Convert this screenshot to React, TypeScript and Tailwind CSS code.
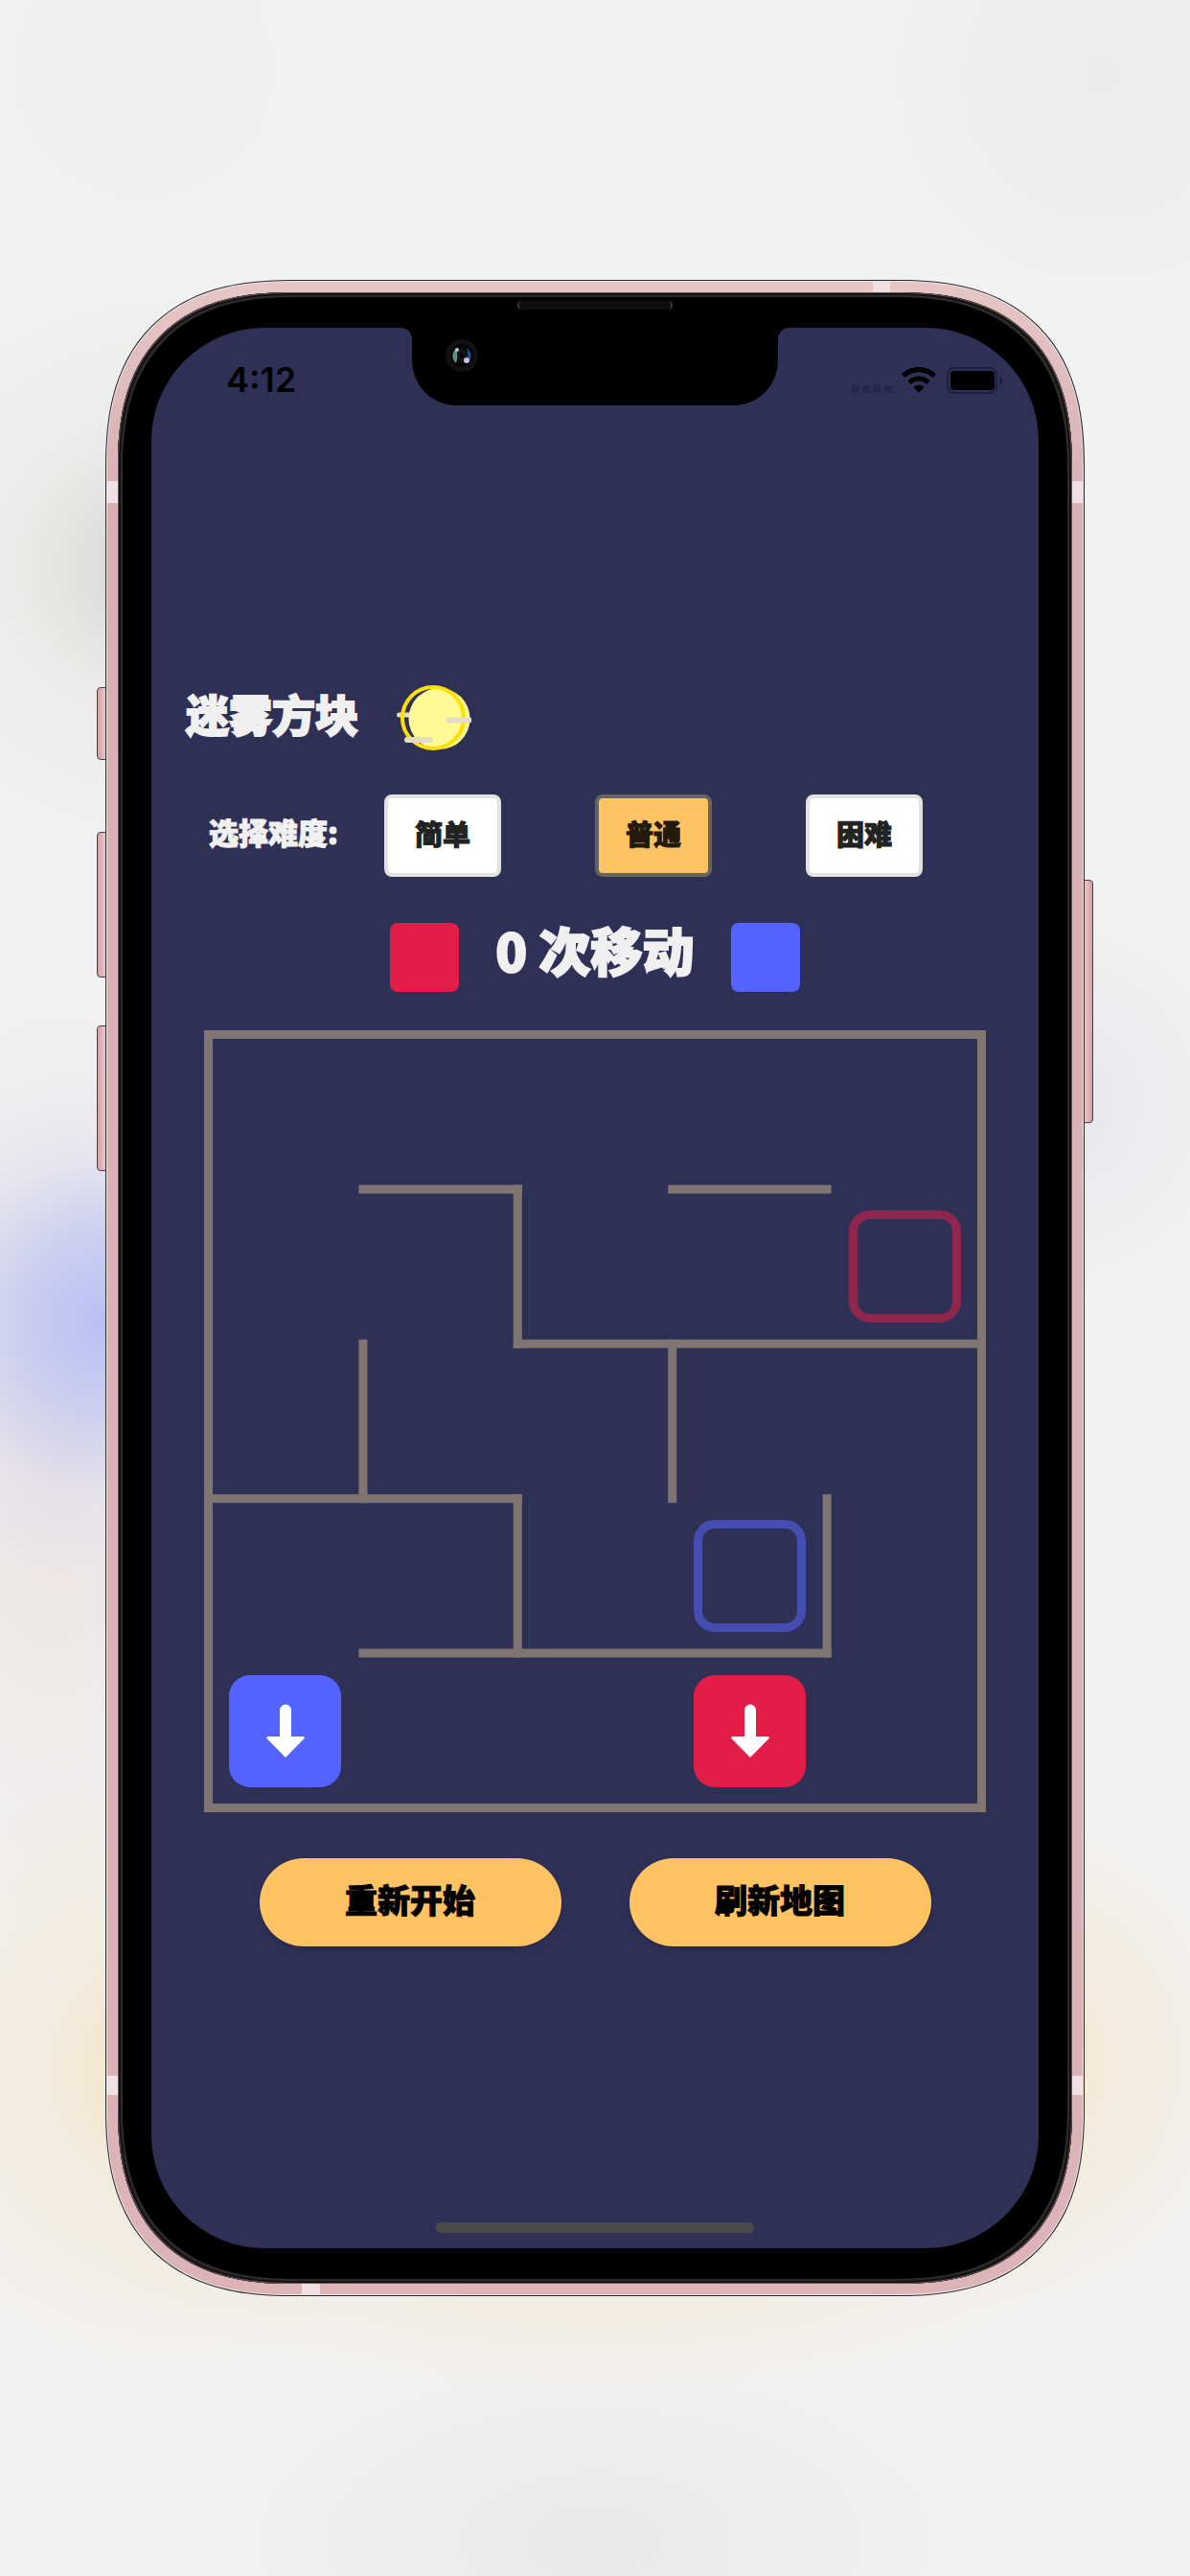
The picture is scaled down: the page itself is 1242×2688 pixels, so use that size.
import { useState } from "react";

type Tone = "red" | "blue";

const LEVELS = ["简单", "普通", "困难"];

// Walls in cell units: [x1, y1, x2, y2]
const WALLS: [number, number, number, number][] = [
  [0, 0, 5, 0],
  [5, 0, 5, 5],
  [0, 5, 5, 5],
  [0, 0, 0, 5],
  [1, 1, 2, 1],
  [3, 1, 4, 1],
  [2, 1, 2, 2],
  [2, 2, 5, 2],
  [1, 2, 1, 3],
  [3, 2, 3, 3],
  [0, 3, 2, 3],
  [2, 3, 2, 4],
  [4, 3, 4, 4],
  [1, 4, 4, 4],
];

const GOALS: Record<number, Tone> = { 9: "red", 18: "blue" };
const PLAYERS: Record<number, Tone> = { 20: "blue", 23: "red" };

function MoonIcon() {
  return (
    <svg viewBox="0 0 78 68" className="h-[68px] w-[78px]" aria-hidden="true">
      <path d="M2.5 31h14" stroke="#e4dcc4" strokeWidth="5" strokeLinecap="round" />
      <circle cx="44.500" cy="35" r="32" fill="#fffa96" />
      <circle cx="38" cy="34" r="32" fill="none" stroke="#ffe100" strokeWidth="4" />
      <path d="M54.500 36.500h21M11 57h24" stroke="#e4dcc4" strokeWidth="6" strokeLinecap="round" />
    </svg>
  );
}

function ArrowDown() {
  return (
    <svg viewBox="0 0 40 56" className="h-14 w-10" aria-hidden="true">
      <path
        d="M20 .5a6 6 0 0 1 6 6V34h12.500a1.300 1.300 0 0 1 .9 2.200L20 56 .6 36.200A1.300 1.300 0 0 1 1.500 34H14V6.500a6 6 0 0 1 6-6z"
        fill="#fff"
      />
    </svg>
  );
}

function StatusIcons() {
  return (
    <svg viewBox="0 0 158 28" className="h-7 w-[158px]" aria-label="Wi-Fi, 电量已满" role="img">
      <g fill="#25264a">
        <rect x="0" y="19" width="8" height="8" rx="2" />
        <rect x="11" y="19" width="8" height="8" rx="2" />
        <rect x="22" y="19" width="8" height="8" rx="2" />
        <rect x="34" y="19" width="8" height="8" rx="2" />
      </g>
      <path
        d="M70 0C63.200 0 57.100 2.600 52.500 6.900c-.4.400-.4.900 0 1.300l2.300 2.400c.4.400.9.400 1.300 0C59.700 7.300 64.600 5.200 70 5.200s10.300 2.100 13.900 5.400c.4.400.9.400 1.300 0l2.300-2.400c.4-.4.4-.9 0-1.300C82.900 2.600 76.800 0 70 0z"
        fill="#000"
      />
      <path
        d="M70 9.500c-4.300 0-8.100 1.600-11.100 4.300-.4.300-.4.900 0 1.300l2.300 2.300c.4.400.9.400 1.300.1 2-1.800 4.600-2.900 7.500-2.900s5.500 1.100 7.500 2.900c.4.300.9.300 1.300-.1l2.300-2.300c.4-.4.4-1 0-1.300-3-2.700-6.800-4.300-11.100-4.300z"
        fill="#000"
      />
      <path
        d="M70 18.700c-1.900 0-3.600.7-4.900 1.800-.4.400-.4.900 0 1.300l4.200 4.300c.4.400 1 .4 1.400 0l4.200-4.300c.4-.4.4-.9 0-1.300-1.300-1.100-3-1.800-4.900-1.800z"
        fill="#000"
      />
      <rect x="100" y="1" width="51" height="26" rx="7" fill="none" stroke="#1f2040" strokeWidth="2" />
      <rect x="103" y="4" width="46" height="20" rx="4" fill="#000" />
      <path d="M154 9.500c2 .7 3.300 2.500 3.300 4.700s-1.300 4-3.300 4.700z" fill="#1f2040" />
    </svg>
  );
}

function Notch() {
  return (
    <svg
      viewBox="0 0 406 81"
      className="absolute left-1/2 top-0 h-[81px] w-[406px] -translate-x-1/2"
      aria-hidden="true"
    >
      <defs>
        <radialGradient id="lens">
          <stop offset="0" stopColor="#000" />
          <stop offset=".5" stopColor="#161616" />
          <stop offset="1" stopColor="#050505" />
        </radialGradient>
      </defs>
      <path d="M0 0h406c-7 0-12 5-12 12v21c0 27-20 48-47 48H59C32 81 12 60 12 33V12C12 5 7 0 0 0z" fill="#000" />
      <circle cx="64" cy="29" r="17" fill="#111" />
      <circle cx="64" cy="29" r="12" fill="#030303" />
      <circle cx="64" cy="29" r="10" fill="url(#lens)" />
      <path d="M59 21c-6 4-6 12-1 16 2-5 1-10 1-16z" fill="#5f8f78" />
      <path d="M69 21c6 4 6 12 1 16-1-5 2-9-1-16z" fill="#1d4f96" />
      <circle cx="59" cy="23" r="2" fill="#b8cfc4" />
      <circle cx="69" cy="34" r="3" fill="#c9bfe0" />
    </svg>
  );
}

function Board() {
  const at = (n: number) => 4.5 + n * 161.4;
  return (
    <div className="relative mx-[55px] mt-10 aspect-square">
      <svg viewBox="0 0 816 816" className="absolute inset-0 h-full w-full" aria-hidden="true">
        {WALLS.map(([x1, y1, x2, y2]) => (
          <line
            key={`${x1}-${y1}-${x2}-${y2}`}
            x1={at(x1)}
            y1={at(y1)}
            x2={at(x2)}
            y2={at(y2)}
            stroke="#7f7573"
            strokeWidth="9"
            strokeLinecap="square"
          />
        ))}
      </svg>
      <div className="grid h-full grid-cols-5 grid-rows-5 p-1">
        {Array.from({ length: 25 }, (_, i) => (
          <div key={i} className="flex items-center justify-center">
            {GOALS[i] && (
              <div
                className={
                  GOALS[i] === "red"
                    ? "size-[117px] rounded-[22px] border-9 border-[#8f264e]"
                    : "size-[117px] rounded-[22px] border-9 border-[#454db0]"
                }
              />
            )}
            {PLAYERS[i] && (
              <button
                type="button"
                aria-label={PLAYERS[i] === "red" ? "红色方块" : "蓝色方块"}
                className={
                  PLAYERS[i] === "red"
                    ? "flex size-[117px] items-center justify-center rounded-[22px] bg-[#e11d48]"
                    : "flex size-[117px] items-center justify-center rounded-[22px] bg-[#5462ff]"
                }
              >
                <ArrowDown />
              </button>
            )}
          </div>
        ))}
      </div>
    </div>
  );
}

function SideButtons() {
  return (
    <div aria-hidden="true">
      <div className="absolute -left-[9px] top-[425px] h-[76px] w-2.5 rounded-l-[4px] border border-[#4b3d42] bg-linear-to-r from-[#cfa1a5] to-[#efc6c8]" />
      <div className="absolute -left-[9px] top-[576px] h-[152px] w-2.5 rounded-l-[4px] border border-[#4b3d42] bg-linear-to-r from-[#cfa1a5] to-[#efc6c8]" />
      <div className="absolute -left-[9px] top-[778px] h-[152px] w-2.5 rounded-l-[4px] border border-[#4b3d42] bg-linear-to-r from-[#cfa1a5] to-[#efc6c8]" />
      <div className="absolute -right-[9px] top-[626px] h-[254px] w-2.5 rounded-r-[4px] border border-[#4b3d42] bg-linear-to-l from-[#cfa1a5] to-[#efc6c8]" />
    </div>
  );
}

function Antennas() {
  return (
    <div aria-hidden="true">
      <div className="absolute left-0 top-[208px] h-[23px] w-[11px] bg-[#efe1e3]" />
      <div className="absolute right-0 top-[208px] h-[23px] w-[11px] bg-[#efe1e3]" />
      <div className="absolute bottom-[208px] left-0 h-5 w-[11px] bg-[#efe1e3]" />
      <div className="absolute bottom-[208px] right-0 h-5 w-[11px] bg-[#efe1e3]" />
      <div className="absolute right-[201px] top-0 h-[11px] w-[18px] bg-[#efe1e3]" />
      <div className="absolute bottom-0 left-[203px] h-[11px] w-[19px] bg-[#efe1e3]" />
    </div>
  );
}

export default function App() {
  const [level, setLevel] = useState("普通");

  return (
    <div className="flex min-h-screen items-center justify-center bg-[#f2f2f2] bg-[radial-gradient(circle_at_110px_1380px,#b9bff5_0,#c4c8f1cc_90px,#d8daf055_180px,transparent_270px),radial-gradient(circle_at_180px_2160px,#f4e3bd_0,#f2e6cc77_140px,transparent_320px),radial-gradient(circle_at_1040px_2150px,#f6dfb0_0,#f3e4c577_120px,transparent_260px),radial-gradient(ellipse_520px_150px_at_620px_2350px,#f1e5ccaa_0,transparent_100%),radial-gradient(circle_at_150px_590px,#d6d6d4_0,#e2e2e077_130px,transparent_300px),radial-gradient(circle_at_1150px_80px,#ebebeb_0,transparent_260px),radial-gradient(circle_at_150px_70px,#efefef_0,transparent_240px),radial-gradient(ellipse_400px_200px_at_620px_2650px,#e8e8e8_0,transparent_100%),radial-gradient(circle_at_1100px_1150px,#e6e5ea_0,transparent_200px),radial-gradient(ellipse_240px_500px_at_60px_1520px,#ebe3e3_0,transparent_100%)] px-[110px] py-16 font-['Inter','Noto_Sans_CJK_SC',sans-serif]">
      <div className="relative w-full max-w-5xl">
        <SideButtons />
        <div className="relative rounded-[168px] bg-[#23282d] p-px [corner-shape:superellipse(1.3)] supports-[corner-shape:squircle]:rounded-[196px]">
          <div className="rounded-[167px] bg-[#eee3e5] p-px [corner-shape:superellipse(1.3)] supports-[corner-shape:squircle]:rounded-[195px]">
            <div className="relative rounded-[166px] bg-linear-to-b from-[#e6c7c5] via-[#d9b1b5] via-10% to-[#dcb3b7] p-[11px] [corner-shape:superellipse(1.3)] supports-[corner-shape:squircle]:rounded-[194px]">
              <Antennas />
              <div className="relative rounded-[155px] bg-black px-[35px] py-[37px] shadow-[inset_0_0_0_1px_#5e5052,inset_0_0_0_3px_#151213,inset_0_0_0_5px_#2c2c2c] [corner-shape:superellipse(1.3)] supports-[corner-shape:squircle]:rounded-[183px]">
                <div className="absolute left-1/2 top-[9px] h-[9px] w-[162px] -translate-x-1/2 rounded-full border-x-2 border-[#3a3a3a] bg-[#0e0e0e]" />
                <main className="relative flex flex-col rounded-[118px] bg-[#2f3056] pb-4">
                  <Notch />
                  <header className="flex h-[81px] items-end justify-between pl-[78px] pr-[37px]">
                    <time className="text-[36px] leading-[54px] font-semibold text-black">4:12</time>
                    <div className="pb-3">
                      <StatusIcons />
                    </div>
                  </header>

                  <div className="mt-[292px] flex items-center gap-10 pl-9 font-['Noto_Sans_CJK_SC',sans-serif]">
                    <h1 className="pb-2 text-[45px] leading-[60px] font-black text-[#f0f0f0] [-webkit-text-stroke:2px_#f0f0f0]">
                      迷雾方块
                    </h1>
                    <MoonIcon />
                  </div>

                  <div
                    role="group"
                    aria-labelledby="level-label"
                    className="mt-[46px] flex items-center pl-[60px] font-['Noto_Sans_CJK_SC',sans-serif]"
                  >
                    <span
                      id="level-label"
                      className="w-[183px] pb-2 text-[31px] leading-10 font-black text-[#f0f0f0] [-webkit-text-stroke:1px_#f0f0f0]"
                    >
                      选择难度:
                    </span>
                    <div className="flex gap-[98px]">
                      {LEVELS.map((name) => (
                        <button
                          key={name}
                          type="button"
                          aria-pressed={name === level}
                          onClick={() => setLevel(name)}
                          className={
                            name === level
                              ? "h-[86px] w-[122px] rounded-lg border-4 border-[#666460] bg-[#ffc363] pb-1 text-[29px] font-black text-[#221a0d] [-webkit-text-stroke:1px_#221a0d]"
                              : "h-[86px] w-[122px] rounded-lg border-4 border-[#e2e2e2] bg-white pb-1 text-[29px] font-black text-[#222222] [-webkit-text-stroke:1px_#222222]"
                          }
                        >
                          {name}
                        </button>
                      ))}
                    </div>
                  </div>

                  <div className="mt-12 flex h-[72px] items-center justify-center gap-[34px] font-['Noto_Sans_CJK_SC',sans-serif]">
                    <div className="size-[72px] rounded-lg bg-[#e11d48]" />
                    <p className="w-[216px] pb-4 text-center text-[54px] leading-[64px] font-black whitespace-nowrap text-[#f0f0f0] [-webkit-text-stroke:2px_#f0f0f0]">
                      0 次移动
                    </p>
                    <div className="size-[72px] rounded-lg bg-[#5462ff]" />
                  </div>

                  <Board />

                  <div className="mt-12 flex justify-center gap-[71px] font-['Noto_Sans_CJK_SC',sans-serif]">
                    <button
                      type="button"
                      className="h-[92px] w-[315px] rounded-full bg-[#ffc363] pb-2 text-[34px] font-black text-black shadow-[0_2px_4px_#0003] [-webkit-text-stroke:1px_#000000]"
                    >
                      重新开始
                    </button>
                    <button
                      type="button"
                      className="h-[92px] w-[315px] rounded-full bg-[#ffc363] pb-2 text-[34px] font-black text-black shadow-[0_2px_4px_#0003] [-webkit-text-stroke:1px_#000000]"
                    >
                      刷新地图
                    </button>
                  </div>

                  <div className="mx-auto mt-72 h-[11px] w-[332px] rounded-full bg-[#4a4a4a]" />
                </main>
              </div>
            </div>
          </div>
        </div>
      </div>
    </div>
  );
}
